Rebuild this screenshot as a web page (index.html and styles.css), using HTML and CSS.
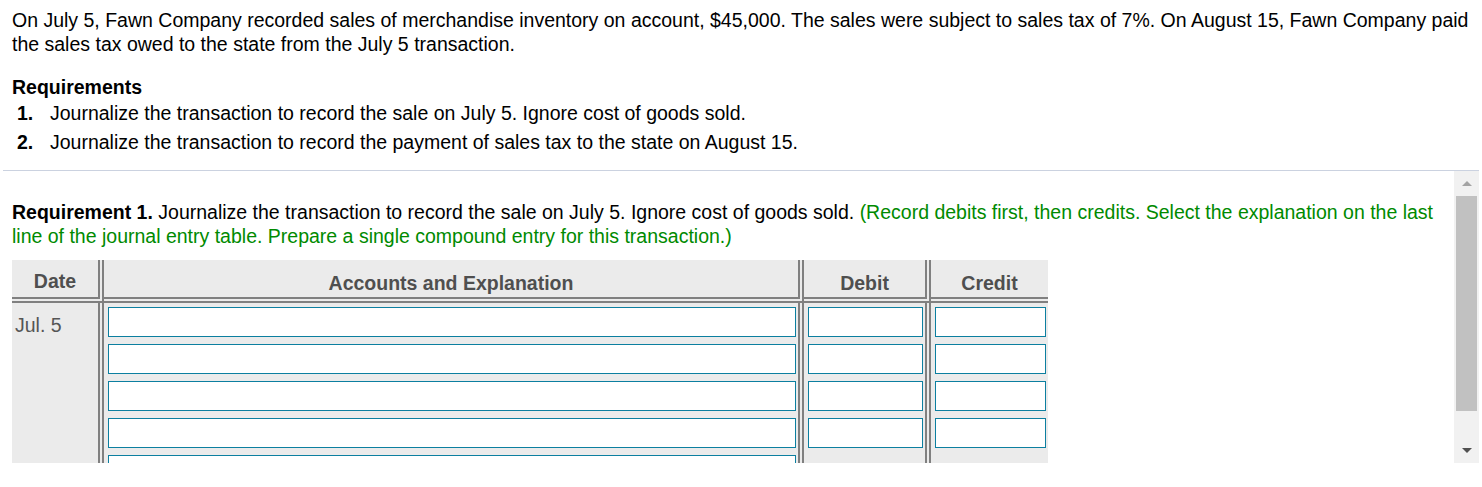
FILE: index.html
```html
<!DOCTYPE html>
<html>
<head>
<meta charset="utf-8">
<link rel="stylesheet" href="styles.css">
</head>
<body>
<div class="page">
  <div class="top">
    <p class="intro">On July 5, Fawn Company recorded sales of merchandise inventory on account, $45,000. The sales were subject to sales tax of 7%. On August 15, Fawn Company paid the sales tax owed to the state from the July 5 transaction.</p>
    <h3 class="req-title">Requirements</h3>
    <ol class="req-list">
      <li><span class="num">1.</span><span>Journalize the transaction to record the sale on July 5. Ignore cost of goods sold.</span></li>
      <li><span class="num">2.</span><span>Journalize the transaction to record the payment of sales tax to the state on August 15.</span></li>
    </ol>
  </div>
  <div class="divider"></div>
  <div class="panel">
    <div class="panel-content">
      <p class="req1"><b>Requirement 1.</b> Journalize the transaction to record the sale on July 5. Ignore cost of goods sold. <span class="hint">(Record debits first, then credits. Select the explanation on the last line of the journal entry table. Prepare a single compound entry for this transaction.)</span></p>
      <div class="journal">
        <div class="hcell col-date">Date</div>
        <div class="hcell col-acct">Accounts and Explanation</div>
        <div class="hcell col-debit">Debit</div>
        <div class="hcell col-credit last">Credit</div>

        <div class="bcell date-cell">Jul. 5</div>
        <div class="bcell stack">
          <input class="field" type="text">
          <input class="field" type="text">
          <input class="field" type="text">
          <input class="field" type="text">
          <input class="field" type="text">
        </div>
        <div class="bcell stack">
          <input class="field" type="text">
          <input class="field" type="text">
          <input class="field" type="text">
          <input class="field" type="text">
        </div>
        <div class="bcell stack last">
          <input class="field" type="text">
          <input class="field" type="text">
          <input class="field" type="text">
          <input class="field" type="text">
        </div>
      </div>
    </div>
    <div class="scrollbar">
      <div class="sb-btn"><span class="arrow-up"></span></div>
      <div class="sb-thumb"></div>
      <div class="sb-space"></div>
      <div class="sb-btn"><span class="arrow-down"></span></div>
    </div>
  </div>
</div>
</body>
</html>
```

FILE: styles.css
```css
html, body {
  margin: 0;
  padding: 0;
  background: #ffffff;
}

body {
  font-family: "Liberation Sans", Arial, sans-serif;
  font-size: 19.5px;
  line-height: 24px;
  color: #000000;
}

.page {
  padding-top: 8px;
}

.top {
  padding: 0 12px;
}

.intro {
  margin: 0;
}

.req-title {
  margin: 19px 0 0 0;
  font-size: 19.5px;
  line-height: 24px;
  font-weight: bold;
}

.req-list {
  list-style: none;
  margin: 0;
  padding: 0;
}

.req-list li {
  display: flex;
  line-height: 29px;
  padding-left: 5px;
}

.req-list .num {
  width: 33px;
  font-weight: bold;
}

.divider {
  margin: 13px 0 0 3px;
  width: 1476px;
  height: 1px;
  background: #cbd2e0;
}

.panel {
  display: flex;
  margin-left: 3px;
  width: 1476px;
  height: 292px;
  overflow: hidden;
}

.panel-content {
  flex: 1;
  padding: 29px 0 0 9px;
  overflow: hidden;
}

.req1 {
  margin: 0;
  width: 1435px;
}

.hint {
  color: #008a00;
}

.journal {
  margin-top: 12px;
  display: grid;
  grid-template-columns: 92px 700px 127px 117px;
  width: 1036px;
  background: #ebebeb;
}

.hcell {
  padding-top: 11px;
  box-sizing: content-box;
  height: 26px;
  text-align: center;
  font-weight: bold;
  color: #4f4f4f;
  border-bottom: 6px double #808080;
  border-right: 6px double #808080;
}

.hcell.col-date {
  padding-top: 9px;
  height: 28px;
}

.hcell.last,
.bcell.last {
  border-right: none;
}

.bcell {
  border-right: 6px double #808080;
}

.date-cell {
  padding: 10px 0 0 3px;
  color: #555555;
}

.stack {
  display: flex;
  flex-direction: column;
  gap: 7px;
  padding: 4px 0 8px 4px;
}

.field {
  display: block;
  box-sizing: border-box;
  width: calc(100% - 2px);
  height: 30px;
  margin: 0;
  padding: 0 4px;
  border: 1px solid #0c7fa0;
  background: #ffffff;
  font-family: "Liberation Sans", Arial, sans-serif;
  font-size: 16px;
  outline: none;
  border-radius: 0;
}

.scrollbar {
  width: 25px;
  flex: none;
  display: flex;
  flex-direction: column;
  background: #f1f1f1;
}

.sb-btn {
  height: 25px;
  flex: none;
  display: flex;
  align-items: center;
  justify-content: center;
}

.arrow-up {
  width: 0;
  height: 0;
  border-left: 5px solid transparent;
  border-right: 5px solid transparent;
  border-bottom: 5px solid #a3a3a3;
}

.arrow-down {
  width: 0;
  height: 0;
  border-left: 5px solid transparent;
  border-right: 5px solid transparent;
  border-top: 5px solid #505050;
}

.sb-thumb {
  height: 215px;
  flex: none;
  margin: 0 2px;
  background: #c1c1c1;
}

.sb-space {
  flex: 1;
}
```
